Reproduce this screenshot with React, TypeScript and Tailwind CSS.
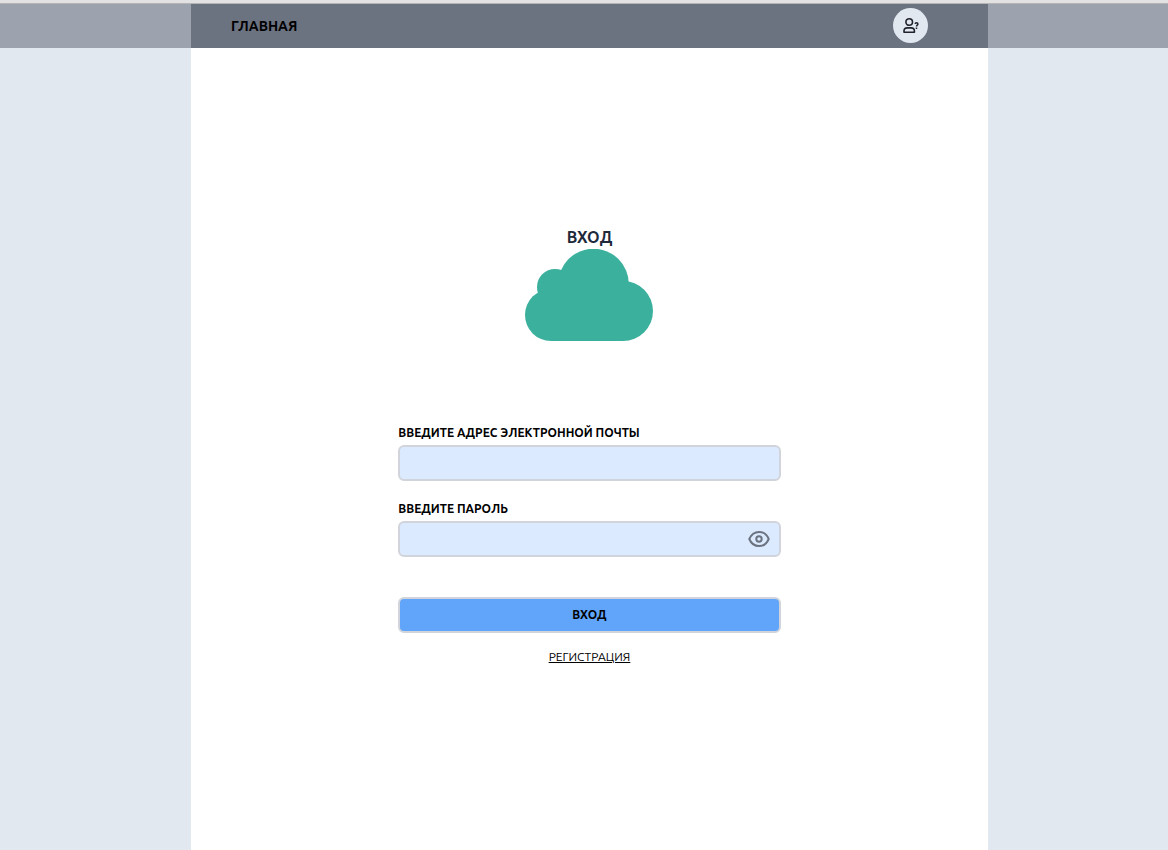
import { useState } from "react";

function CloudLogo() {
  return (
    <svg viewBox="0 0 128 92" className="mr-px h-[92px] w-32" fill="#3bb19d" aria-hidden="true">
      <circle cx="26" cy="66" r="26" />
      <circle cx="30" cy="38" r="18" />
      <circle cx="68.500" cy="35" r="35.300" />
      <circle cx="98" cy="62" r="30" />
      <path d="M26 50h72v42H26z" />
    </svg>
  );
}

function GuestIcon() {
  return (
    <svg viewBox="0 0 18 18" className="size-[18px]" fill="none" stroke="#1f2329" strokeWidth="1.600" aria-hidden="true">
      <circle cx="7.200" cy="5" r="3.300" />
      <path d="M2 15.200v-1.200c0-2 1.600-3.100 3.400-3.100h3.600c1.800 0 3.400 1.100 3.400 3.100v1.200z" strokeLinejoin="round" />
      <path d="M13.200 7c0-1.800 2.700-1.800 2.700 0 0 1.200-1.400 1.100-1.400 2.600M14.500 10.500v1.400" strokeWidth="1.500" />
    </svg>
  );
}

function EyeIcon() {
  return (
    <svg viewBox="0 0 22 18" className="h-[18px] w-[22px]" fill="none" stroke="#6b7280" strokeWidth="2" aria-hidden="true">
      <path d="M1.300 9C3.200 4.500 6.700 1.900 11 1.900S18.800 4.500 20.700 9C18.800 13.500 15.300 16.100 11 16.100S3.200 13.500 1.300 9z" strokeLinejoin="round" />
      <circle cx="11" cy="9" r="2.700" />
    </svg>
  );
}

export default function App() {
  const [visible, setVisible] = useState(false);

  return (
    <div className="flex min-h-screen flex-col bg-[#e1e8f0] font-['Ubuntu','Noto_Sans',sans-serif] text-black">
      <div className="h-1 border-b border-[#b5b5b6] bg-[#e2e2e2]" />
      <header className="grid grid-cols-[191fr_797fr_180fr] bg-[#9ca3af]">
        <nav className="col-start-2 flex h-11 items-center justify-between bg-[#6b7280] pr-[60px] pl-10">
          <a href="#home" className="text-sm font-bold">ГЛАВНАЯ</a>
          <button type="button" aria-label="Профиль" className="mb-px flex size-[35px] items-center justify-center rounded-full bg-[#e2e8f0]">
            <GuestIcon />
          </button>
        </nav>
      </header>
      <div className="grid flex-1 grid-cols-[191fr_797fr_180fr]">
        <main className="col-start-2 flex flex-col items-center bg-white pt-[177px]">
          <h1 className="text-base font-bold text-[#1e293b]">ВХОД</h1>
          <CloudLogo />
          <form className="mt-20 flex w-[48%] flex-col text-xs" onSubmit={(e) => e.preventDefault()}>
            <label htmlFor="email" className="mt-1 font-bold">ВВЕДИТЕ АДРЕС ЭЛЕКТРОННОЙ ПОЧТЫ</label>
            <input id="email" type="email" className="mt-1 h-9 w-full rounded-md border-2 border-[#d1d5db] bg-[#dbeafe] px-2" />
            <label htmlFor="password" className="mt-5 font-bold">ВВЕДИТЕ ПАРОЛЬ</label>
            <div className="mt-1 flex h-9 items-center rounded-md border-2 border-[#d1d5db] bg-[#dbeafe] pr-[9px]">
              <input id="password" type={visible ? "text" : "password"} className="h-full min-w-0 flex-1 bg-transparent px-2 outline-none" />
              <button type="button" aria-label="Показать пароль" onClick={() => setVisible(!visible)}>
                <EyeIcon />
              </button>
            </div>
            <button type="submit" className="mt-10 h-9 rounded-md border-2 border-[#d1d5db] bg-[#60a5fa] font-bold">ВХОД</button>
            <a href="#register" className="mt-4 self-center underline">РЕГИСТРАЦИЯ</a>
          </form>
        </main>
      </div>
    </div>
  );
}
